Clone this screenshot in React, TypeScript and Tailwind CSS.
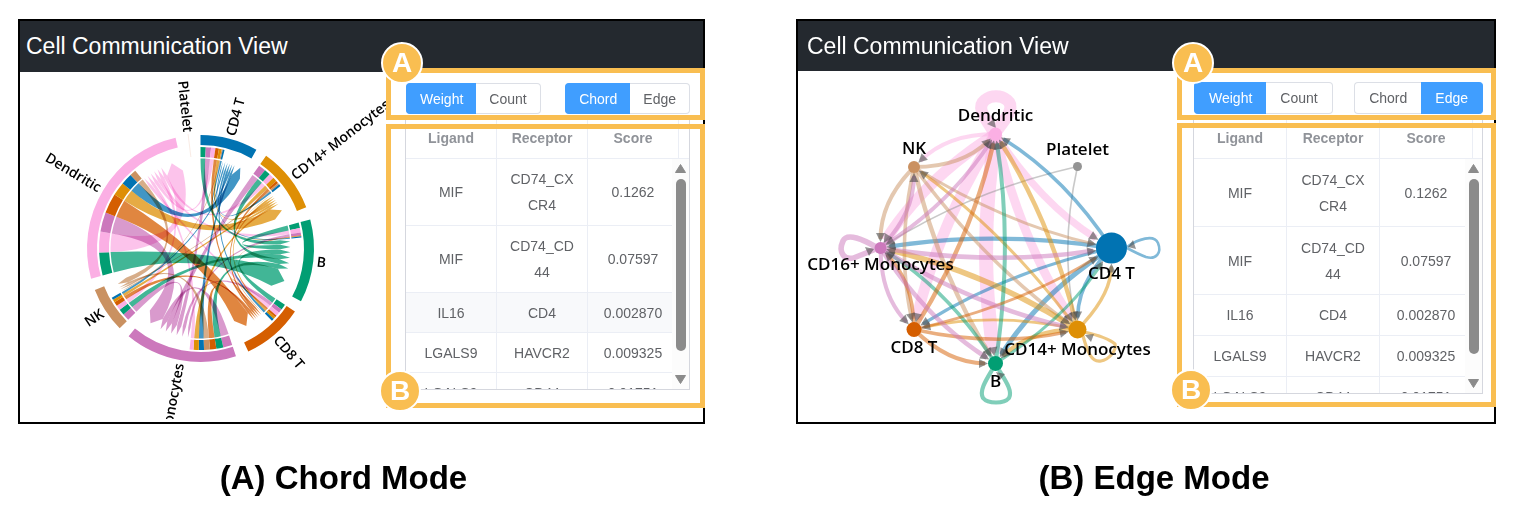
import { useState } from "react";

type Group = "CD4 T" | "CD14+ Monocytes" | "B" | "CD8 T" | "CD16+ Monocytes" | "NK" | "Dendritic" | "Platelet";
type Mode = "Chord" | "Edge";

const COLORS: Record<Group, string> = {
  "CD4 T": "#0173b2",
  "CD14+ Monocytes": "#de8f05",
  B: "#029e73",
  "CD8 T": "#d55e00",
  "CD16+ Monocytes": "#cc78bc",
  NK: "#ca9161",
  Dendritic: "#fbafe4",
  Platelet: "#949494",
};

const CD4: Group = "CD4 T";
const CD14: Group = "CD14+ Monocytes";
const B: Group = "B";
const CD8: Group = "CD8 T";
const CD16: Group = "CD16+ Monocytes";
const NK: Group = "NK";
const DEN: Group = "Dendritic";
const PLT: Group = "Platelet";

/* ---------- chord diagram ---------- */

const CX = 200.5;
const CY = 248.5;

function polar(r: number, deg: number): [number, number] {
  const a = (deg * Math.PI) / 180;
  return [CX + r * Math.sin(a), CY - r * Math.cos(a)];
}

function pt(r: number, deg: number) {
  return polar(r, deg)
    .map((v) => v.toFixed(2))
    .join(",");
}

function band(r0: number, r1: number, a0: number, a1: number) {
  return `M${pt(r1, a0)}A${r1},${r1} 0 0 1 ${pt(r1, a1)}L${pt(r0, a1)}A${r0},${r0} 0 0 0 ${pt(r0, a0)}Z`;
}

interface Arc {
  group: Group;
  start: number;
  end: number;
  out: [Group, number][];
}

const ARCS: Arc[] = [
  { group: CD4, start: 0, end: 29.5, out: [[B, 3], [CD16, 3], [DEN, 2.5], [CD8, 2], [CD14, 1.6], [NK, 0.6], [CD4, 1]] },
  { group: CD14, start: 35.3, end: 68.7, out: [[CD16, 4.2], [B, 3.5], [DEN, 2.9], [CD14, 2.4], [CD8, 1.5], [NK, 1], [CD4, 1.2]] },
  { group: B, start: 75.2, end: 117.7, out: [[B, 3.2], [DEN, 2.5], [CD16, 1.6], [CD8, 0.3], [CD14, 0.3], [CD4, 0.7]] },
  { group: CD8, start: 123.7, end: 155.1, out: [[B, 3.3], [CD16, 2.3], [DEN, 2.2], [CD8, 1.2], [CD14, 1.2], [CD4, 1.4]] },
  { group: CD16, start: 161.8, end: 219.3, out: [[CD16, 5.2], [B, 4], [CD8, 3.6], [NK, 3.4], [CD4, 3], [CD14, 3], [DEN, 2.2]] },
  { group: NK, start: 225.4, end: 248.6, out: [[CD16, 4], [B, 3.4], [DEN, 2.8], [CD8, 2.4], [CD14, 1.6], [CD4, 1.4]] },
  {
    group: DEN,
    start: 254.6,
    end: 347.3,
    out: [[B, 13.1], [DEN, 11.9], [CD16, 11.1], [CD8, 11.4], [CD14, 7.8], [CD4, 6.5], [NK, 3.6]],
  },
];

interface Segment {
  from: Group;
  to: Group;
  a0: number;
  a1: number;
}

const SEGMENTS: Segment[] = ARCS.flatMap((arc) => {
  let a = arc.start;
  return arc.out.map(([to, size]) => {
    const seg = { from: arc.group, to, a0: a, a1: a + size };
    a += size;
    return seg;
  });
});

const RIBBONS = ARCS.flatMap((arc) => {
  const begin = arc.start + arc.out.reduce((s, [, v]) => s + v, 0);
  const incoming = SEGMENTS.filter((s) => s.to === arc.group).sort((p, q) => p.a1 - p.a0 - (q.a1 - q.a0));
  const largest = incoming[incoming.length - 1];
  const largestSize = Math.min(largest.a1 - largest.a0, arc.end - begin - 2);
  const rest = (arc.end - begin - largestSize) / (incoming.length - 1);
  let a = begin;
  return incoming.map((seg) => {
    const size = seg === largest ? largestSize : rest;
    const t0 = a;
    const t1 = a + size;
    a = t1;
    const sourceSize = seg.a1 - seg.a0;
    const trim = seg === largest ? 0 : Math.max(0, (size - sourceSize) / 2);
    const r = 90;
    const d = `M${pt(r, seg.a0)}A${r},${r} 0 0 1 ${pt(r, seg.a1)}Q${CX},${CY} ${pt(80, t0 + trim)}L${pt(r, (t0 + t1) / 2)}L${pt(80, t1 - trim)}Q${CX},${CY} ${pt(r, seg.a0)}Z`;
    return { key: `${seg.from}-${seg.to}`, d, color: COLORS[seg.to] };
  });
});

function ChordChart() {
  const labels = [...ARCS.map((a) => ({ group: a.group, mid: (a.start + a.end) / 2 })), { group: PLT, mid: 354 }];
  return (
    <svg viewBox="20 72 366 350" role="img" aria-label="Chord diagram" className="block min-w-0 flex-1 self-start overflow-visible">
      <defs>
        <clipPath id="chord-clip">
          <rect x="20" y="72" width="375" height="347" />
        </clipPath>
      </defs>
      <g clipPath="url(#chord-clip)">
        {ARCS.map((a) => (
          <path key={a.group} d={band(103.5, 113.5, a.start, a.end)} fill={COLORS[a.group]} />
        ))}
        {SEGMENTS.map((s) => (
          <path key={`${s.from}-${s.to}`} d={band(91.5, 101.5, s.a0, s.a1)} fill={COLORS[s.to]} />
        ))}
        <path d={`M${pt(115, 353.8)}L${pt(92, 354)}`} stroke="#f8e6dd" strokeWidth="0.8" />
        <g fillOpacity="0.75">
          {RIBBONS.map((r) => (
            <path key={r.key} d={r.d} fill={r.color} className="mix-blend-multiply" />
          ))}
        </g>
        {labels.map(({ group, mid }) => {
          const [x, y] = polar(117, mid);
          const right = mid < 180;
          return (
            <text
              key={group}
              transform={`translate(${x.toFixed(1)} ${y.toFixed(1)}) rotate(${right ? mid - 90 : mid + 90})`}
              textAnchor={right ? "start" : "end"}
              dy="5"
              className="fill-black font-['Open_Sans',sans-serif] text-[14px] font-semibold"
            >
              {group}
            </text>
          );
        })}
      </g>
    </svg>
  );
}

/* ---------- edge network ---------- */

interface NodeInfo {
  x: number;
  y: number;
  r: number;
  labelY: number;
}

const NODES: Record<Group, NodeInfo> = {
  Dendritic: { x: 995.5, y: 134, r: 6.5, labelY: 121 },
  NK: { x: 914, y: 167, r: 6, labelY: 154 },
  Platelet: { x: 1077.5, y: 166.5, r: 4.5, labelY: 155 },
  "CD16+ Monocytes": { x: 880.5, y: 248, r: 6, labelY: 270 },
  "CD4 T": { x: 1111.5, y: 248, r: 15.5, labelY: 279 },
  "CD8 T": { x: 914, y: 329.5, r: 7.5, labelY: 353 },
  "CD14+ Monocytes": { x: 1077.5, y: 329.5, r: 9, labelY: 355 },
  B: { x: 995.5, y: 363.5, r: 7.5, labelY: 387 },
};

const EDGES: [Group, Group, number][] = [
  [DEN, B, 14], [DEN, CD8, 11], [DEN, CD16, 11], [DEN, CD14, 9], [DEN, CD4, 7], [DEN, NK, 4],
  [PLT, CD16, 1.6], [PLT, CD14, 1.6],
  [CD4, DEN, 3.6], [CD4, CD16, 4.4], [CD4, B, 5], [CD4, CD14, 3.6], [CD4, CD8, 3.2],
  [NK, DEN, 4], [NK, CD16, 4], [NK, B, 4.4], [NK, CD8, 3.6], [NK, CD14, 3.6], [NK, CD4, 2.8],
  [CD14, DEN, 4.4], [CD14, NK, 3], [CD14, CD16, 5.6], [CD14, B, 4.4], [CD14, CD4, 3.4], [CD14, CD8, 2.8],
  [B, DEN, 4], [B, CD4, 3], [B, CD16, 3.6],
  [CD8, DEN, 4.4], [CD8, CD16, 3.6], [CD8, B, 4], [CD8, CD14, 3.4], [CD8, CD4, 2.8],
  [CD16, DEN, 4], [CD16, NK, 4], [CD16, CD4, 4.6], [CD16, CD8, 4], [CD16, B, 4.6], [CD16, CD14, 4.6],
];

const LOOPS: [Group, number, string][] = [
  [DEN, 12, "M994,132C984,117 976,107 985,100C991,95 1001,95 1007,100C1016,107 1006,118 996,132"],
  [CD16, 5.6, "M876,247C864,240 847,232 843,241C838,252 844,262 856,257L876,249"],
  [CD4, 2.6, "M1127,247C1138,239 1154,234 1158,243C1162,253 1156,260 1146,257Q1138,254 1127,248"],
  [CD14, 3.2, "M1083,336C1087,350 1091,363 1101,361C1108,360 1117,351 1115,344Q1107,337 1084,332"],
  [B, 4.2, "M992,370C986,380 979,391 983,398C988,404 1004,404 1009,398C1013,391 1005,380 999,370"],
];

const LOOP_ARROWS = ["M996,128L987,124L994,119Z", "M874,249L865,247L869,256Z", "M1128,247L1133,240L1136,249Z", "M1085,335L1094,334L1091,342Z", "M996,372L1005,374L1000,380Z"];

function edgeGeometry(from: Group, to: Group) {
  const s = NODES[from];
  const t = NODES[to];
  const dx = t.x - s.x;
  const dy = t.y - s.y;
  const len = Math.hypot(dx, dy);
  const cx = (s.x + t.x) / 2 - (dy / len) * 18;
  const cy = (s.y + t.y) / 2 + (dx / len) * 18;
  const back = Math.hypot(t.x - cx, t.y - cy);
  const ux = (t.x - cx) / back;
  const uy = (t.y - cy) / back;
  const tip = [t.x - ux * t.r, t.y - uy * t.r];
  const base = [tip[0] - ux * 9, tip[1] - uy * 9];
  const f = (n: number) => n.toFixed(1);
  return {
    curve: `M${f(s.x)},${f(s.y)}Q${f(cx)},${f(cy)} ${f(tip[0] - ux * 3)},${f(tip[1] - uy * 3)}`,
    head: `M${f(tip[0])},${f(tip[1])}L${f(base[0] - uy * 4.5)},${f(base[1] + ux * 4.5)}L${f(base[0] + uy * 4.5)},${f(base[1] - ux * 4.5)}Z`,
  };
}

function EdgeChart() {
  return (
    <svg viewBox="798 71 379 351" role="img" aria-label="Edge network" className="block min-w-0 flex-1 self-start overflow-visible">
      <g fill="none" strokeOpacity="0.5">
        {EDGES.map(([from, to, width]) => (
          <path key={`${from}-${to}`} d={edgeGeometry(from, to).curve} stroke={COLORS[from]} strokeWidth={width} />
        ))}
        {LOOPS.map(([group, width, d]) => (
          <path key={group} d={d} stroke={COLORS[group]} strokeWidth={width} />
        ))}
      </g>
      <g fill="#4d4d4d" fillOpacity="0.6">
        {EDGES.map(([from, to]) => (
          <path key={`${from}-${to}`} d={edgeGeometry(from, to).head} />
        ))}
        {LOOP_ARROWS.map((d) => (
          <path key={d} d={d} />
        ))}
      </g>
      {(Object.keys(NODES) as Group[]).map((g) => (
        <circle key={g} cx={NODES[g].x} cy={NODES[g].y} r={NODES[g].r} fill={COLORS[g]} />
      ))}
      {(Object.keys(NODES) as Group[]).map((g) => (
        <text
          key={g}
          x={NODES[g].x}
          y={NODES[g].labelY}
          textAnchor="middle"
          className="fill-black font-['Open_Sans',sans-serif] text-[17px] font-semibold"
        >
          {g}
        </text>
      ))}
    </svg>
  );
}

/* ---------- controls and table ---------- */

function Toggle({ label, options, initial, roomy }: { label: string; options: string[]; initial: string; roomy: boolean }) {
  const [value, setValue] = useState(initial);
  return (
    <div role="group" aria-label={label} className="flex">
      {options.map((o) => (
        <button
          key={o}
          type="button"
          aria-pressed={value === o}
          onClick={() => setValue(o)}
          className={`border-y text-sm leading-none first:rounded-l first:border-l last:rounded-r last:border-r ${
            roomy ? "h-8 px-[14px]" : "h-[31px] px-[13px]"
          } ${value === o ? "border-[#409eff] bg-[#409eff] text-white" : "border-[#dcdfe6] bg-white text-[#606266]"}`}
        >
          {o}
        </button>
      ))}
    </div>
  );
}

const ROWS: [string, string[], string][] = [
  ["MIF", ["CD74_CX", "CR4"], "0.1262"],
  ["MIF", ["CD74_CD", "44"], "0.07597"],
  ["IL16", ["CD4"], "0.002870"],
  ["LGALS9", ["HAVCR2"], "0.009325"],
  ["LGALS9", ["CD44"], "0.01751"],
];

function PairTable({ roomy, activeRow }: { roomy: boolean; activeRow?: number }) {
  const cell = "border-b border-r border-[#ebeef5] p-0 text-center";
  const col = roomy ? "w-[93px]" : "w-[91px]";
  return (
    <div className={`relative -ml-px mt-1 overflow-hidden border-x border-b border-[#d5d7de] bg-white ${roomy ? "h-[276px]" : "h-[272px]"}`}>
      <table className="w-full table-fixed border-separate border-spacing-0 text-sm text-[#606266]">
        <colgroup>
          <col className={col} />
          <col className={col} />
          <col className={col} />
          <col />
        </colgroup>
        <thead>
          <tr className="h-[41px] text-[#909399]">
            <th className={cell}>Ligand</th>
            <th className={cell}>Receptor</th>
            <th className={cell}>Score</th>
            <td className="border-b border-[#ebeef5]" />
          </tr>
        </thead>
        <tbody>
          {ROWS.map(([ligand, receptor, score], i) => (
            <tr
              key={i}
              className={`leading-[26px] ${receptor.length > 1 ? (roomy ? "h-[68px]" : "h-[67px]") : roomy ? "h-[41px]" : "h-10"} ${
                i === activeRow ? "bg-[#f8f9fb]" : ""
              }`}
            >
              <td className={cell}>{ligand}</td>
              <td className={cell}>
                {receptor.map((part) => (
                  <span key={part} className="block">
                    {part}
                  </span>
                ))}
              </td>
              <td className={cell}>{score}</td>
              <td className="border-b border-[#ebeef5]" />
            </tr>
          ))}
        </tbody>
      </table>
      <div aria-hidden="true" className="absolute top-[41px] right-0 bottom-0 flex w-[17px] flex-col items-center bg-[#fcfcfc] py-[5px]">
        <svg viewBox="0 0 11 9" className="h-[9px] w-[11px]">
          <path d="M5.5 0.5L10.5 8.5H0.5Z" fill="#8b8b8b" stroke="#8b8b8b" strokeLinejoin="round" />
        </svg>
        <div className={`mt-1.5 mb-auto w-2.5 rounded-full bg-[#8b8b8b] ${roomy ? "h-[175px]" : "h-[172px]"}`} />
        <svg viewBox="0 0 11 9" className="h-[9px] w-[11px]">
          <path d="M5.5 8.5L10.5 0.5H0.5Z" fill="#8b8b8b" stroke="#8b8b8b" strokeLinejoin="round" />
        </svg>
      </div>
    </div>
  );
}

function Badge({ letter, place }: { letter: string; place: string }) {
  return (
    <span
      className={`absolute flex size-[42px] items-center justify-center rounded-full border-2 border-white bg-[#f9be51] text-[28px] leading-none font-bold text-white ${place}`}
    >
      {letter}
    </span>
  );
}

function CommunicationPanel({ mode }: { mode: Mode }) {
  const roomy = mode === "Edge";
  return (
    <section className="border-2 border-black bg-white">
      <header className={`flex items-center bg-[#24292f] ${roomy ? "h-[50px] pl-[9px]" : "h-[51px] pl-1.5"}`}>
        <h2 className="text-[23px] leading-none text-white">Cell Communication View</h2>
      </header>
      <div className="flex">
        {mode === "Chord" ? <ChordChart /> : <EdgeChart />}
        <div className={`relative w-[317px] shrink-0 pt-[11px] ${roomy ? "pr-[11px] pl-[17px]" : "pr-[13px] pl-5"}`}>
          <div className="flex justify-between">
            <Toggle label="Measure" options={["Weight", "Count"]} initial="Weight" roomy={roomy} />
            <Toggle label="Chart type" options={["Chord", "Edge"]} initial={mode} roomy={roomy} />
          </div>
          <PairTable roomy={roomy} activeRow={roomy ? undefined : 2} />
          <div
            className={`pointer-events-none absolute -right-0.5 left-0 h-[52px] border-[5px] border-[#f9be51] ${roomy ? "-top-[3px]" : "-top-1"}`}
          />
          <div
            className={`pointer-events-none absolute top-[52px] -right-0.5 left-0 border-[5px] border-[#f9be51] ${roomy ? "bottom-[15px]" : "bottom-[14px]"}`}
          />
          <Badge letter="A" place={roomy ? "-top-[29px] -left-[5px]" : "-top-[30px] -left-[5px]"} />
          <Badge letter="B" place={roomy ? "bottom-[11px] -left-[7px]" : "bottom-[10px] -left-[7px]"} />
        </div>
      </div>
    </section>
  );
}

export default function App() {
  return (
    <main className="grid grid-cols-[687fr_700fr] gap-x-[91px] bg-white pt-[19px] pr-5 pb-3 pl-[18px] font-['Liberation_Sans',Arial,sans-serif]">
      <figure className="flex min-w-0 flex-col">
        <CommunicationPanel mode="Chord" />
        <figcaption className="mt-[34px] pr-9 text-center text-[33px] leading-[40px] font-bold text-black">(A) Chord Mode</figcaption>
      </figure>
      <figure className="flex min-w-0 flex-col">
        <CommunicationPanel mode="Edge" />
        <figcaption className="mt-[34px] pl-4 text-center text-[33px] leading-[40px] font-bold text-black">(B) Edge Mode</figcaption>
      </figure>
    </main>
  );
}
